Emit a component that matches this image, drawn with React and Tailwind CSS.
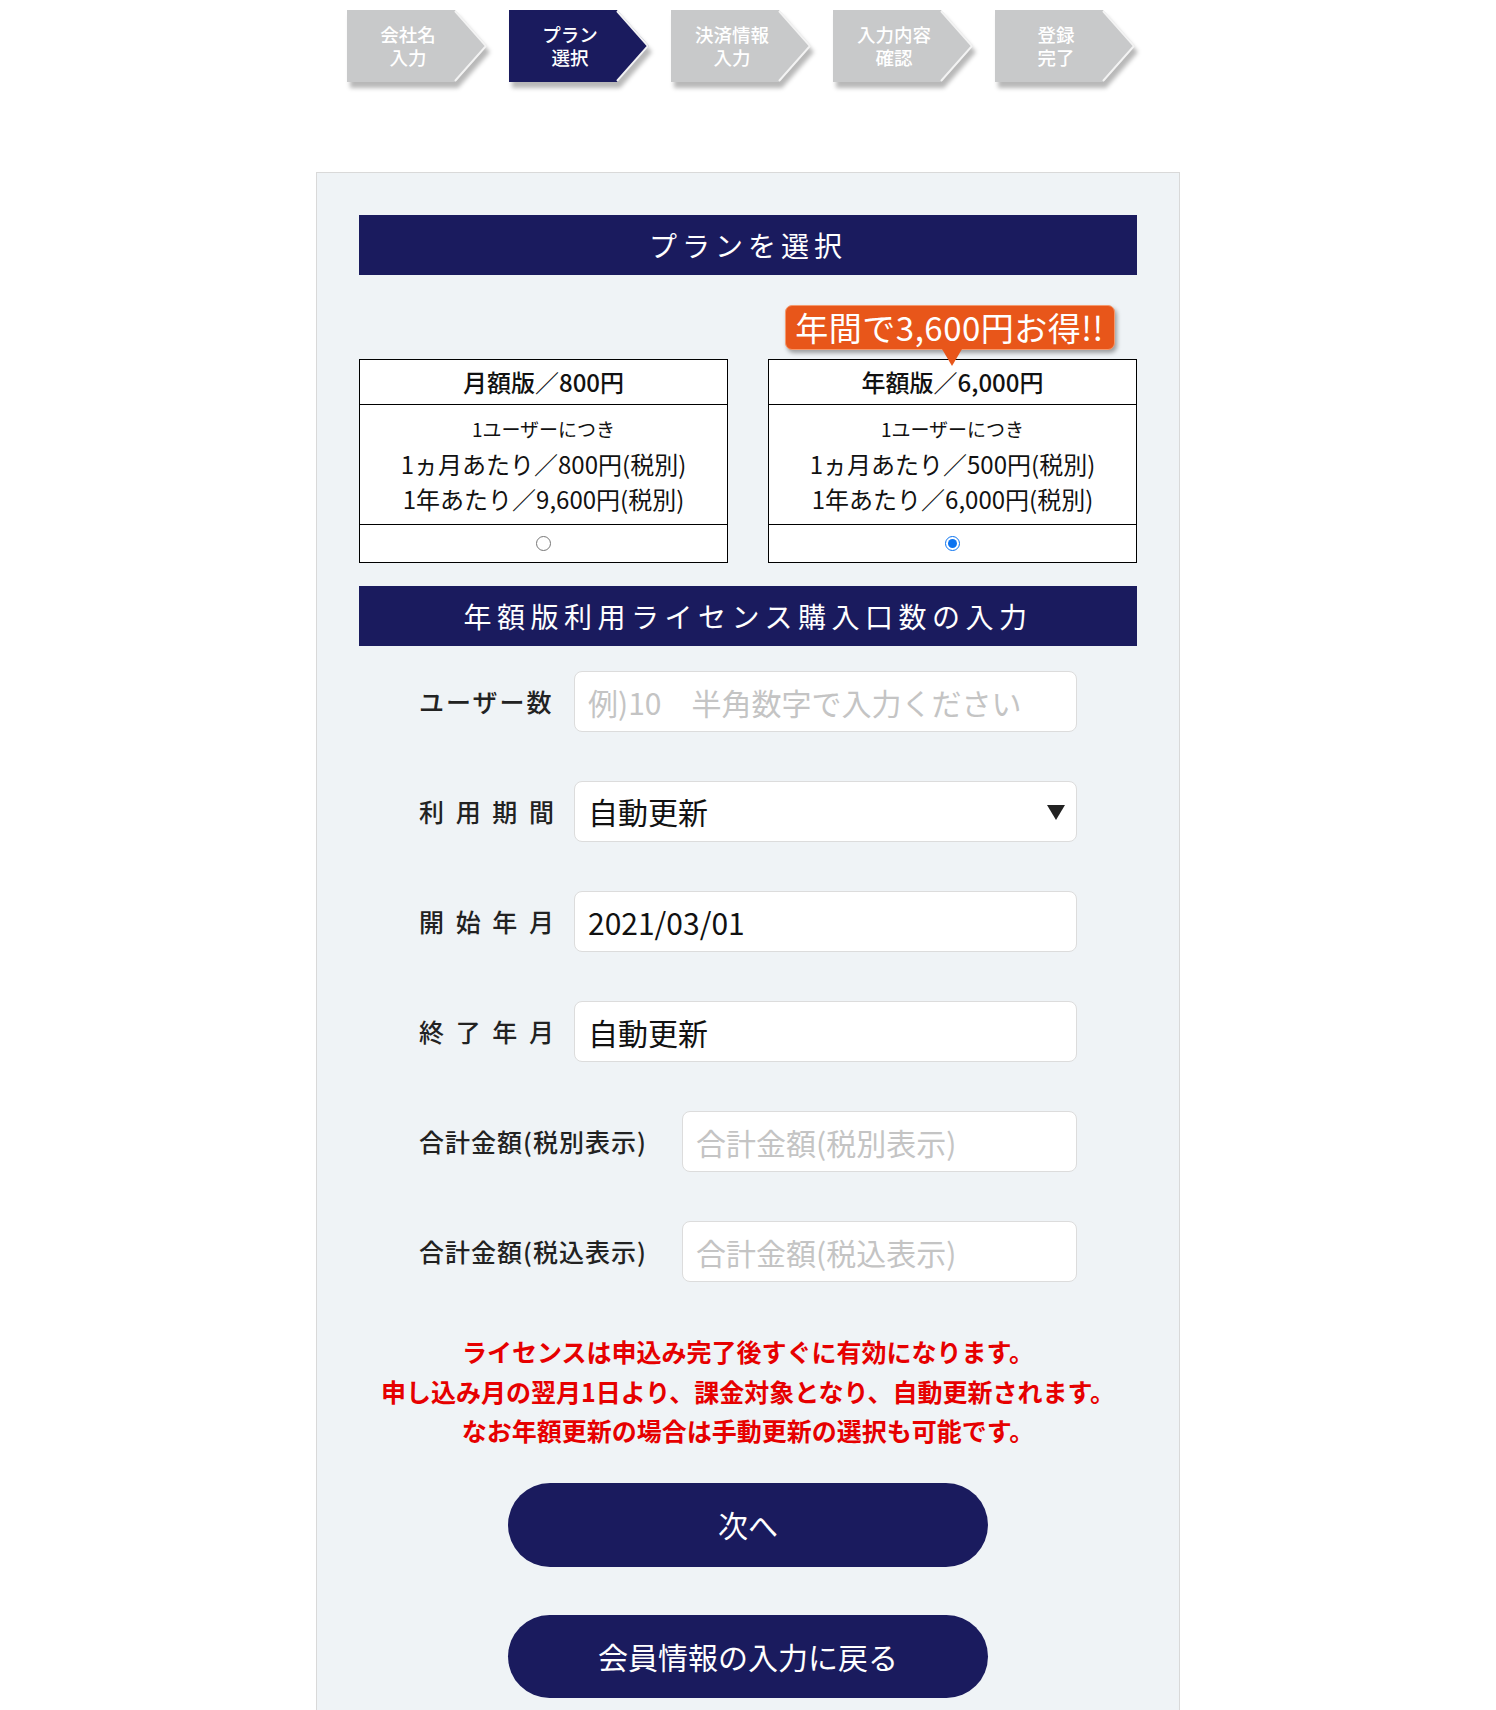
import React from "react";

const steps = [
  ["会社名", "入力"],
  ["プラン", "選択"],
  ["決済情報", "入力"],
  ["入力内容", "確認"],
  ["登録", "完了"],
];

function Step({ lines, active }) {
  return (
    <div className="relative w-[140px] h-[72px] shrink-0">
      <svg
        width="146"
        height="80"
        viewBox="0 0 146 80"
        className="absolute left-0 top-0 overflow-visible"
      >
        <polygon
          points="3,6 111,6 143,42 111,78 3,78"
          fill="rgba(0,0,0,0.28)"
          style={{ filter: "blur(2px)" }}
        />
        <polygon
          points="0,0 108,0 140,36 108,72 0,72"
          fill={active ? "#1a1b5e" : "#c8c9ca"}
        />
        <polyline
          points="108,1 139,36 108,71"
          fill="none"
          stroke="#f3f3f3"
          strokeWidth="2"
        />
      </svg>
      <div className="relative z-10 w-[122px] h-[72px] flex flex-col items-center justify-center text-white text-[18.5px] leading-[23px] font-medium">
        <div className="h-[23px] leading-[23px]">{lines[0]}</div>
        <div className="h-[23px] leading-[23px]">{lines[1]}</div>
      </div>
    </div>
  );
}

function PlanCard({ title, price1, price2, checked }) {
  return (
    <div className="border border-black bg-white flex flex-col text-[#111]">
      <div className="h-[45px] flex items-center justify-center border-b border-black text-[24px] font-medium">
        {title}
      </div>
      <div className="h-[119px] flex flex-col items-center pt-[10px]">
        <div className="text-[19px] leading-[28px]">1ユーザーにつき</div>
        <div className="text-[24px] leading-[35px] mt-[3px]">{price1}</div>
        <div className="text-[24px] leading-[35px]">{price2}</div>
      </div>
      <div className="h-[38px] flex items-center justify-center border-t border-black">
        <input
          type="radio"
          name="plan"
          defaultChecked={checked}
          className="w-[15px] h-[15px] m-0 accent-[#0b73f0]"
        />
      </div>
    </div>
  );
}

function Label({ children, wide }) {
  return (
    <div
      className={
        (wide ? "w-[263px] " : "w-[155px] ") +
        "shrink-0 text-[25px] font-medium text-[#222] tracking-[1px]"
      }
    >
      {children}
    </div>
  );
}

function Spread({ text }) {
  return (
    <div className="w-[136px] flex justify-between">
      {text.split("").map((c, i) => (
        <span key={i}>{c}</span>
      ))}
    </div>
  );
}

const inputCls =
  "flex-1 h-[61px] rounded-[8px] border border-[#dcdcdc] bg-white px-[13px] text-[30px] text-[#111] placeholder:text-[#c4c4c4] outline-none";

export default function App() {
  return (
    <div className="w-full min-h-[1710px] bg-white">
      <div className="font-['Noto_Sans_CJK_JP','Noto_Sans',sans-serif]">
        <div className="w-[864px] mx-auto pl-[31px] pt-[10px] flex gap-[22px]">
          {steps.map((s, i) => (
            <Step key={i} lines={s} active={i === 1} />
          ))}
        </div>

        <div className="w-[864px] mx-auto mt-[90px] border border-[#d9d9d9] bg-[#eff3f6] px-[42px] pt-[42px] pb-[40px]">
          <div className="h-[60px] bg-[#1a1b5e] text-white text-[28px] tracking-[5px] flex items-center justify-center">
            プランを選択
          </div>

          <div className="mt-[30px] grid grid-cols-2 gap-x-[40px] items-end">
            <PlanCard
              title="月額版／800円"
              price1="1ヵ月あたり／800円(税別)"
              price2="1年あたり／9,600円(税別)"
              checked={false}
            />
            <div className="flex flex-col items-center">
              <div className="relative z-10 w-[330px] h-[45px] mb-[9px] mr-[6px] rounded-[7px] bg-[#e8561a] border border-[#f59a6e] shadow-[2px_3px_4px_rgba(0,0,0,0.35)] flex items-center justify-center text-white text-[33px] tracking-[0.5px] leading-none">
                年間で3,600円お得!!
                <svg
                  width="20"
                  height="18"
                  viewBox="0 0 20 18"
                  className="absolute left-[156px] top-[43px]"
                >
                  <polygon points="0,0 20,0 10,17" fill="#e8561a" />
                </svg>
              </div>
              <div className="w-full">
                <PlanCard
                  title="年額版／6,000円"
                  price1="1ヵ月あたり／500円(税別)"
                  price2="1年あたり／6,000円(税別)"
                  checked={true}
                />
              </div>
            </div>
          </div>

          <div className="mt-[23px] h-[60px] bg-[#1a1b5e] text-white text-[28px] tracking-[5.5px] flex items-center justify-center">
            年額版利用ライセンス購入口数の入力
          </div>

          <div className="mt-[25px] px-[60px] flex flex-col gap-[49px]">
            <div className="flex items-center">
              <Label>
                <span className="tracking-[2px]">ユーザー数</span>
              </Label>
              <input
                className={inputCls}
                placeholder="例)10　半角数字で入力ください"
              />
            </div>
            <div className="flex items-center">
              <Label>
                <Spread text="利用期間" />
              </Label>
              <div className={inputCls + " relative flex items-center"}>
                <span>自動更新</span>
                <svg
                  width="18"
                  height="15"
                  viewBox="0 0 18 15"
                  className="absolute right-[11px] top-[23px]"
                >
                  <polygon points="0,0 18,0 9,15" fill="#222" />
                </svg>
              </div>
            </div>
            <div className="flex items-center">
              <Label>
                <Spread text="開始年月" />
              </Label>
              <input className={inputCls} defaultValue="2021/03/01" readOnly />
            </div>
            <div className="flex items-center">
              <Label>
                <Spread text="終了年月" />
              </Label>
              <input className={inputCls} defaultValue="自動更新" readOnly />
            </div>
            <div className="flex items-center">
              <Label wide>合計金額(税別表示)</Label>
              <input className={inputCls} placeholder="合計金額(税別表示)" />
            </div>
            <div className="flex items-center">
              <Label wide>合計金額(税込表示)</Label>
              <input className={inputCls} placeholder="合計金額(税込表示)" />
            </div>
          </div>

          <div className="mt-[50px] text-center text-[#e60000] text-[25px] font-bold leading-[39.5px]">
            <div>ライセンスは申込み完了後すぐに有効になります。</div>
            <div>申し込み月の翌月1日より、課金対象となり、自動更新されます。</div>
            <div>なお年額更新の場合は手動更新の選択も可能です。</div>
          </div>

          <div className="mt-[32px] flex flex-col items-center gap-[48px]">
            <button className="w-[480px] h-[84px] rounded-full bg-[#1a1b5e] text-white text-[30px]">
              次へ
            </button>
            <button className="w-[480px] h-[83px] rounded-full bg-[#1a1b5e] text-white text-[30px]">
              会員情報の入力に戻る
            </button>
          </div>
        </div>
      </div>
    </div>
  );
}
